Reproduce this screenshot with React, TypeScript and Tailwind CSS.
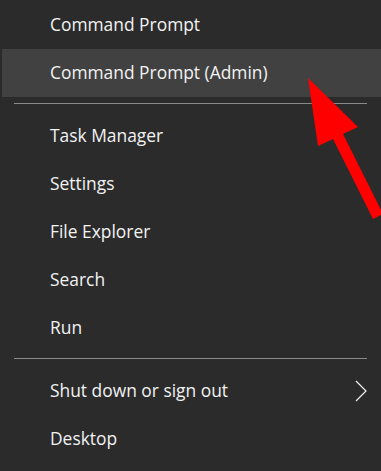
import React from "react";

type Item = { label: string; active?: boolean; submenu?: boolean };

const groups: Item[][] = [
  [{ label: "Command Prompt" }, { label: "Command Prompt (Admin)", active: true }],
  [
    { label: "Task Manager" },
    { label: "Settings" },
    { label: "File Explorer" },
    { label: "Search" },
    { label: "Run" },
  ],
  [{ label: "Shut down or sign out", submenu: true }, { label: "Desktop" }],
];

function Row({ item }: { item: Item }) {
  return (
    <div
      className={
        "flex h-12 items-center justify-between pl-[48px] pr-[14px] ml-[2px] " +
        (item.active ? "bg-[#414141]" : "")
      }
    >
      <span className="text-[17.4px] text-[#f2f2f2] leading-none">{item.label}</span>
      {item.submenu ? (
        <svg width="12" height="22" viewBox="0 0 12 22" fill="none">
          <path d="M1 1 L11 11 L1 21" stroke="#f2f2f2" strokeWidth="1.2" />
        </svg>
      ) : null}
    </div>
  );
}

export default function App() {
  return (
    <div
      className="relative h-[471px] w-[381px] overflow-hidden bg-[#2b2b2b] pt-px"
      style={{ fontFamily: '"Open Sans", "Noto Sans", sans-serif' }}
    >
      {groups.map((g, gi) => (
        <div key={gi}>
          {gi > 0 ? <div className="mx-[14px] mt-[6px] mb-[8px] h-px bg-[#8a8a8a]" /> : null}
          {g.map((it) => (
            <Row key={it.label} item={it} />
          ))}
        </div>
      ))}

      {/* red arrow pointing at the admin entry */}
      <svg
        className="absolute left-0 top-0"
        width="381"
        height="471"
        viewBox="0 0 381 471"
      >
        <polygon
          points="308,78 358,127 343,134 383,214 373,219 333,139 318,146"
          fill="#ff0000"
        />
      </svg>
    </div>
  );
}
